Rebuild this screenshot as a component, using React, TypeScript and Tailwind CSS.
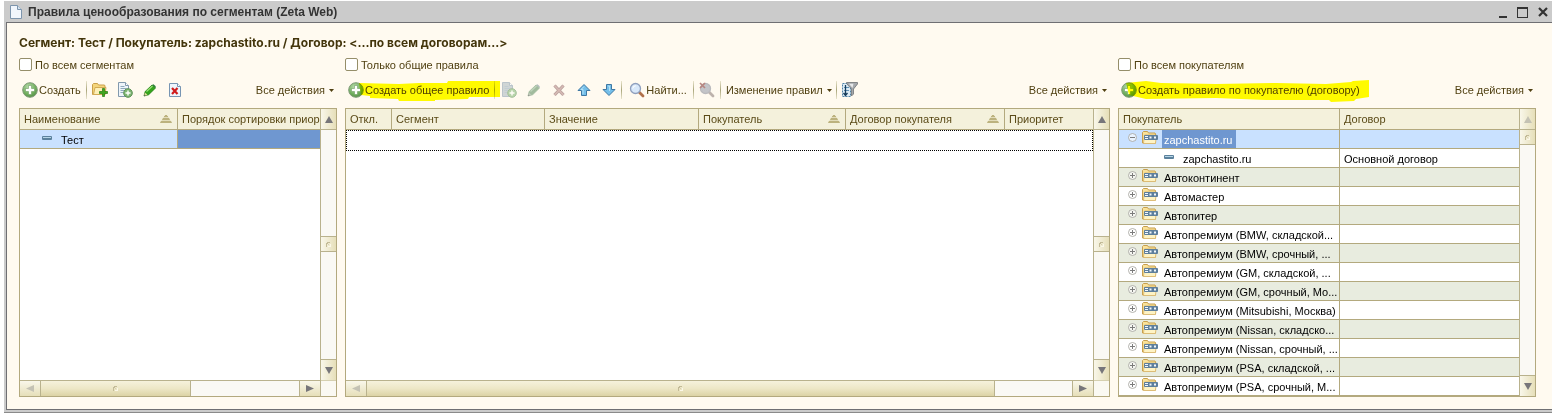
import React from "react";

type IconProps = { muted?: boolean };

const svgBase = "block shrink-0";

function AddIcon() {
  return (
    <svg className={svgBase} width="16" height="16" viewBox="0 0 16 16" aria-hidden="true">
      <defs>
        <radialGradient id="addFill" cx="0.4" cy="0.3" r="0.8">
          <stop offset="0" stopColor="#b9dcae" />
          <stop offset="0.6" stopColor="#6fae5c" />
          <stop offset="1" stopColor="#4f8a45" />
        </radialGradient>
      </defs>
      <circle cx="8" cy="8" r="7.3" fill="url(#addFill)" stroke="#7f9a78" strokeWidth="1" />
      <path d="M6.5 3.500h3v3h3v3h-3v3h-3v-3h-3v-3h3z" fill="#fff" stroke="#5d9150" strokeWidth="0.5" />
    </svg>
  );
}

function FolderAddIcon() {
  return (
    <svg className={svgBase} width="16" height="16" viewBox="0 0 16 16" aria-hidden="true">
      <path d="M.5 12.500v-10l1-1h4l1 1.500h6l.5 1v8.500z" fill="#f4d57c" stroke="#c9a04a" />
      <path d="M1.500 12.500 3 5.500h11l-1 7z" fill="#fdf0b8" stroke="#d3ab55" />
      <path d="M10.500 6.500h2v3h3v2h-3v3h-2v-3h-3v-2h3z" fill="#3fa91f" stroke="#237a10" strokeWidth="0.700" />
    </svg>
  );
}

function DocAddIcon({ muted }: IconProps) {
  return (
    <svg className={svgBase} width="16" height="16" viewBox="0 0 16 16" aria-hidden="true" opacity={muted ? 0.55 : 1}>
      <path d="M1.500 .5h7l3 3v11h-10z" fill={muted ? "#a9b8bf" : "#eef4fa"} stroke="#8299ad" />
      <path d="M8.500 .5v3h3" fill="#fff" stroke="#8299ad" />
      <path d="M3.500 4.500h4M3.500 6.500h6M3.500 8.500h4M3.500 10.500h3" stroke="#8fa9bd" />
      <circle cx="11" cy="11" r="4.300" fill="#7db672" stroke="#5b8f55" />
      <path d="M10.300 8.500h1.400v1.800h1.800v1.400h-1.800v1.800h-1.400v-1.800H8.500v-1.400h1.800z" fill="#fff" />
    </svg>
  );
}

function PencilIcon({ muted }: IconProps) {
  return (
    <svg className={svgBase} width="16" height="16" viewBox="0 0 16 16" aria-hidden="true" opacity={muted ? 0.65 : 1}>
      <path d="M2 14 3.200 9.500 10 3l3.500 3L6.700 12.700z" fill={muted ? "#6f9a72" : "#35a51c"} stroke={muted ? "#6f9a72" : "#1c7a10"} strokeWidth="0.800" />
      <path d="m10 3 1.500-.7 2.200 2-.2 1.700z" fill={muted ? "#8a9aa0" : "#2d7f3a"} />
      <path d="m4.500 9.500 6-5.500" stroke={muted ? "#9fc0a0" : "#9be07a"} strokeWidth="1.200" />
      <path d="m2 14 1-3.500 2.600 2.400z" fill={muted ? "#9fae9f" : "#e4d9a0"} />
      <path d="m2 14 .5-1.600 1.200 1.100z" fill="#444" />
    </svg>
  );
}

function DocDeleteIcon() {
  return (
    <svg className={svgBase} width="16" height="16" viewBox="0 0 16 16" aria-hidden="true">
      <path d="M2.500 1.500h8l3 3v10h-11z" fill="#eef5fc" stroke="#7795b3" />
      <path d="M10.500 1.500v3h3" fill="#fff" stroke="#7795b3" />
      <path d="m5 6 5.500 6m0-6L5 12" stroke="#d01c1c" strokeWidth="2.200" />
    </svg>
  );
}

function CrossIcon() {
  return (
    <svg className={svgBase} width="16" height="16" viewBox="0 0 16 16" aria-hidden="true">
      <path d="m3.500 3.500 9 9.500m0-9.500-9 9.500" stroke="#b8a09c" strokeWidth="3.200" />
      <path d="m3.500 3.500 9 9.500m0-9.500-9 9.500" stroke="#d6b9b4" strokeWidth="1.600" />
    </svg>
  );
}

function ArrowIcon({ down }: { down?: boolean }) {
  return (
    <svg className={svgBase} width="16" height="16" viewBox="0 0 16 16" aria-hidden="true">
      <path
        d={down ? "M5.500 2.500h5v5h3.500L8 13.500 2 7.500h3.500z" : "M5.500 13.500h5v-5H14L8 2.500 2 8.500h3.500z"}
        fill="#74bfea"
        stroke="#3f78a3"
      />
      <path d={down ? "M7 4h1.500v5" : "M7 12V7.500h-2L8 4.500"} fill="none" stroke="#b4e2f8" />
    </svg>
  );
}

function SearchIcon({ muted }: IconProps) {
  return (
    <svg className={svgBase} width="16" height="16" viewBox="0 0 16 16" aria-hidden="true" opacity={muted ? 0.75 : 1}>
      <path d="m10 10 4 4" stroke={muted ? "#a89a96" : "#b0704a"} strokeWidth="2.800" strokeLinecap="round" />
      <circle cx="6.500" cy="6.500" r="5" fill={muted ? "#b0b3bb" : "#d8e8fa"} stroke={muted ? "#a3a5ad" : "#8f9fbd"} strokeWidth="1.300" />
      {!muted && <path d="M3.800 6.500a3 3 0 0 1 3-2.700" fill="none" stroke="#fff" />}
      {muted && <path d="m1 1 5 5m0-5L1 6" stroke="#a0605c" strokeWidth="1.700" />}
    </svg>
  );
}

function FilterIcon() {
  return (
    <svg className={svgBase} width="16" height="16" viewBox="0 0 16 16" aria-hidden="true">
      <path d="M.500 1.500h8v13h-8z" fill="#dcebf5" stroke="#4f82a8" strokeDasharray="2 1" />
      <path d="M2 5.500h5M2 8.500h5" stroke="#5f91b5" />
      <path d="M3.500 3v10M1.500 11l2 2.500 2-2.500" stroke="#173d5c" strokeWidth="1.300" fill="none" />
      <path d="M4.500 .5h11v1.500L11.500 7v5l-2 2V7L5 2z" fill="#a5a8ac" stroke="#6f7276" strokeWidth="0.800" />
      <path d="M7 1.800h4.500l-1 4.200z" fill="#e6e8ea" />
    </svg>
  );
}

function SortIcon() {
  return (
    <svg className={svgBase} width="12" height="8" viewBox="0 0 12 8" aria-hidden="true">
      <path d="M5 0h2l5 8H0z" fill="#e2dcba" />
      <path d="M5 0h2v1h1v1H4V1h1zM3 3h6l1 2H2zM1 6h10l1 2H0z" fill="#bcb27e" />
    </svg>
  );
}

function DashIcon() {
  return (
    <svg className={svgBase} width="10" height="5" viewBox="0 0 10 5" aria-hidden="true">
      <rect x="0" y="0" width="10" height="4" rx="1" fill="#5b819c" />
      <path d="M1 1.500h8" stroke="#b5d4e6" />
    </svg>
  );
}

function FolderIcon() {
  return (
    <svg className={svgBase} width="16" height="13" viewBox="0 0 16 13" aria-hidden="true">
      <path d="M.5 12V1.500l1-1h4l1 1.500h6.500l.5 1v9z" fill="#f9e29a" stroke="#c79f4e" />
      <path d="M1.500 12.500 2.500 4h12l-1 8.500z" fill="#fef3c4" stroke="#d5ae5d" strokeWidth="0.700" />
      <rect x="2" y="4" width="14" height="5" rx="1" fill="#5e7f9c" />
      <path d="M3 5h3v1H3zM3 7h3v1H3zM7.500 5.500h2v2h-2zM12 5.500h2v2h-2z" fill="#f2f7fb" />
    </svg>
  );
}

function ToggleIcon({ open }: { open?: boolean }) {
  return (
    <svg className={svgBase} width="9" height="9" viewBox="0 0 9 9" aria-hidden="true">
      <circle cx="4.500" cy="4.500" r="4" fill="#fff" fillOpacity="0.600" stroke="#aaa9a4" strokeWidth="0.900" />
      <path d={open ? "M2 4.500h5" : "M2 4.500h5M4.500 2v5"} stroke="#7c7c7c" />
    </svg>
  );
}

function Triangle({ dir, faded }: { dir: "up" | "down" | "left" | "right"; faded?: boolean }) {
  const d = { up: "M4 0l4 7H0z", down: "M0 0h8L4 7z", left: "M8 0v7L0 3.500z", right: "M0 0v7l8-3.500z" }[dir];
  return (
    <svg className={svgBase} width="8" height="7" viewBox="0 0 8 7" aria-hidden="true">
      <path d={d} fill={faded ? "#c4c2b4" : "#77767a"} />
    </svg>
  );
}

function Grip() {
  return (
    <svg className={svgBase} width="5" height="5" viewBox="0 0 5 5" aria-hidden="true">
      <path d="M0 1h1V0h3v1H2v1H1v3H0z" fill="#c3bb97" />
      <path d="M2 2h1v1H2z" fill="#d8d1b0" />
      <path d="M4 2h1v3H2V4h2z" fill="#fbf8e8" />
    </svg>
  );
}

function Separator() {
  return <span className="mr-px h-[18px] w-px shrink-0 bg-gradient-to-b from-[#e9e4cc] via-[#aaa67c] to-[#e9e4cc]" />;
}

function IconButton({ label, children, disabled }: { label: string; children: React.ReactNode; disabled?: boolean }) {
  return (
    <button type="button" aria-label={label} disabled={disabled} className="flex h-5 w-[25px] shrink-0 items-center justify-center">
      {children}
    </button>
  );
}

function Caret() {
  return (
    <svg className={svgBase} width="5" height="3" viewBox="0 0 5 3" aria-hidden="true">
      <path d="M0 0h5L2.500 3z" fill="#4f3f10" />
    </svg>
  );
}

function AllActions() {
  return (
    <button type="button" className="ml-auto flex shrink-0 items-center gap-1 whitespace-nowrap pr-[3px]">
      Все действия
      <Caret />
    </button>
  );
}

function CreateButton({ children, marker }: { children: React.ReactNode; marker?: React.ReactNode }) {
  return (
    <button type="button" className="relative flex shrink-0 items-center gap-px whitespace-nowrap pl-[3px] pr-[5px]">
      <AddIcon />
      <span>{children}</span>
      {marker}
    </button>
  );
}

function CheckRow({ id, label }: { id: string; label: string }) {
  return (
    <div className="flex h-[15px] items-center gap-[3px]">
      <input
        id={id}
        type="checkbox"
        className="h-[13px] w-[13px] shrink-0 appearance-none rounded-[2px] border border-[#958e69] bg-white checked:bg-[#958e69]"
      />
      <label htmlFor={id} className="whitespace-nowrap">{label}</label>
    </div>
  );
}

const vGrad = "bg-gradient-to-r from-[#f9f7ea] to-[#e6dfb9]";
const hGrad = "bg-gradient-to-b from-[#f9f7ea] to-[#e6dfb9]";
const sbButton = "flex shrink-0 items-center justify-center border-[#b9b28d]";

function VerticalBar({ atTop, corner }: { atTop?: boolean; corner?: boolean }) {
  return (
    <div className="flex w-4 shrink-0 flex-col border-l border-[#b9b28d] bg-[#faf9f4]">
      <button type="button" aria-label="Вверх" className={`${sbButton} ${vGrad} h-[21px] border-b`}>
        <Triangle dir="up" faded={atTop} />
      </button>
      <div className="flex flex-1 flex-col">
        {!atTop && <div className="flex-[106]" />}
        <div className={`${sbButton} ${vGrad} border-b ${atTop ? "h-[15px]" : "h-4 border-t"}`}>
          <Grip />
        </div>
        <div className="flex-[107]" />
      </div>
      <button type="button" aria-label="Вниз" className={`${sbButton} ${vGrad} h-[21px] border-t`}>
        <Triangle dir="down" />
      </button>
      {corner && <div className="h-4 shrink-0 border-t border-[#d5d0b0] bg-[#faf9f2]" />}
    </div>
  );
}

function HorizontalBar({ thumb, rest }: { thumb: string; rest: string }) {
  return (
    <div className="flex h-4 shrink-0 border-t border-[#b9b28d] bg-[#faf9f4]">
      <button type="button" aria-label="Влево" className={`${sbButton} ${hGrad} w-[21px] border-r`}>
        <Triangle dir="left" faded />
      </button>
      <div className={`flex items-center justify-center border-r border-[#b9b28d] bg-gradient-to-b from-[#f6f2dc] via-[#ede7c6] to-[#dcd3a5] ${thumb}`}>
        <Grip />
      </div>
      <div className={rest} />
      <button type="button" aria-label="Вправо" className={`${sbButton} ${hGrad} w-[21px] border-l`}>
        <Triangle dir="right" />
      </button>
    </div>
  );
}

type Column = { title: string; width: string; sorted?: boolean };

function HeadRow({ columns }: { columns: Column[] }) {
  return (
    <thead>
      <tr>
        {columns.map((c, i) => (
          <th
            key={c.title}
            scope="col"
            className={`h-[21px] overflow-hidden border-b border-[#b3a97e] bg-[#f4f1dc] p-0 pl-1 text-left font-normal text-[#5a4a17] ${c.width} ${
              i < columns.length - 1 ? "border-r" : ""
            }`}
          >
            <div className="flex items-center justify-between">
              <span className="whitespace-nowrap">{c.title}</span>
              {c.sorted && <span className="pr-[5px]"><SortIcon /></span>}
            </div>
          </th>
        ))}
      </tr>
    </thead>
  );
}

const tableClass = "w-full table-fixed border-separate border-spacing-0";
const frame = "flex flex-1 border border-[#b3a97e] bg-white";

const customers = [
  "Автоконтинент",
  "Автомастер",
  "Автопитер",
  "Автопремиум (BMW, складской...",
  "Автопремиум (BMW, срочный, ...",
  "Автопремиум (GM, складской, ...",
  "Автопремиум (GM, срочный, Мо...",
  "Автопремиум (Mitsubishi, Москва)",
  "Автопремиум (Nissan, складско...",
  "Автопремиум (Nissan, срочный, ...",
  "Автопремиум (PSA, складской, ...",
  "Автопремиум (PSA, срочный, М...",
];

const cell = "h-[19px] border-b border-[#b3a97e] p-0";

function TreeNode({ open, selected, children }: { open?: boolean; selected?: boolean; children: React.ReactNode }) {
  return (
    <div className="flex h-[18px] items-center pl-[9px]">
      <span className="flex items-center gap-[5px] pb-[3px]">
        <ToggleIcon open={open} />
        <FolderIcon />
      </span>
      <span className={`ml-1 whitespace-nowrap pl-0.5 leading-[16px] pt-0.5 ${selected ? "bg-[#6f97d0] pr-1 text-white" : ""}`}>{children}</span>
    </div>
  );
}

function Leaf({ indent, children }: { indent: string; children: React.ReactNode }) {
  return (
    <div className={`flex h-[18px] items-center gap-[9px] ${indent}`}>
      <span className="pb-0.5"><DashIcon /></span>
      <span className="pt-0.5">{children}</span>
    </div>
  );
}

function SegmentsPanel() {
  return (
    <section className="flex min-w-0 flex-[318] flex-col">
      <CheckRow id="all-segments" label="По всем сегментам" />
      <div className="flex h-9 items-center">
        <CreateButton>Создать</CreateButton>
        <Separator />
        <IconButton label="Создать группу"><FolderAddIcon /></IconButton>
        <IconButton label="Скопировать"><DocAddIcon /></IconButton>
        <IconButton label="Изменить"><PencilIcon /></IconButton>
        <IconButton label="Пометить на удаление"><DocDeleteIcon /></IconButton>
        <AllActions />
      </div>
      <div className={frame}>
        <div className="flex min-w-0 flex-1 flex-col">
          <div className="flex-1">
            <table className={tableClass}>
              <HeadRow columns={[{ title: "Наименование", width: "w-[158px]", sorted: true }, { title: "Порядок сортировки приор", width: "" }]} />
              <tbody>
                <tr>
                  <td className={`${cell} border-r bg-[#c9e1ff] text-black`}>
                    <Leaf indent="pl-[22px]">Тест</Leaf>
                  </td>
                  <td className={`${cell} bg-[#6f97d0]`} />
                </tr>
              </tbody>
            </table>
          </div>
          <HorizontalBar thumb="flex-[150]" rest="flex-[108]" />
        </div>
        <VerticalBar corner />
      </div>
    </section>
  );
}

function RulesPanel() {
  return (
    <section className="flex min-w-0 flex-[765] flex-col">
      <CheckRow id="common-only" label="Только общие правила" />
      <div className="flex h-9 items-center">
        <CreateButton
          marker={
            <svg className="pointer-events-none absolute -top-0.5 left-3.5 mix-blend-multiply" width="142" height="22" viewBox="0 0 142 22" aria-hidden="true">
              <path d="M0 3 40 4 60 3 88 3 89 1 141 1V17H110L109 19 76 20V21H40L39 19 11 18V16L2 15z" fill="#ffff00" />
            </svg>
          }
        >
          Создать общее правило
        </CreateButton>
        <Separator />
        <IconButton label="Скопировать" disabled><DocAddIcon muted /></IconButton>
        <IconButton label="Изменить" disabled><PencilIcon muted /></IconButton>
        <IconButton label="Удалить" disabled><CrossIcon /></IconButton>
        <IconButton label="Переместить вверх"><ArrowIcon /></IconButton>
        <IconButton label="Переместить вниз"><ArrowIcon down /></IconButton>
        <Separator />
        <button type="button" className="flex shrink-0 items-center gap-px whitespace-nowrap px-1.5"><SearchIcon />Найти...</button>
        <Separator />
        <IconButton label="Отменить поиск" disabled><SearchIcon muted /></IconButton>
        <Separator />
        <button type="button" className="flex shrink-0 items-center gap-1 whitespace-nowrap px-1">Изменение правил<Caret /></button>
        <Separator />
        <IconButton label="Настройка списка"><FilterIcon /></IconButton>
        <AllActions />
      </div>
      <div className={frame}>
        <div className="flex min-w-0 flex-1 flex-col">
          <div className="flex-1">
            <table className={tableClass}>
              <HeadRow
                columns={[
                  { title: "Откл.", width: "w-[46px]" },
                  { title: "Сегмент", width: "w-[153px]" },
                  { title: "Значение", width: "w-[154px]" },
                  { title: "Покупатель", width: "w-[147px]", sorted: true },
                  { title: "Договор покупателя", width: "w-[159px]", sorted: true },
                  { title: "Приоритет", width: "" },
                ]}
              />
              <tbody>
                <tr>
                  <td colSpan={6} className="h-[21px] border border-dotted border-black p-0" />
                </tr>
              </tbody>
            </table>
          </div>
          <HorizontalBar thumb="flex-[628]" rest="flex-[77]" />
        </div>
        <VerticalBar corner />
      </div>
    </section>
  );
}

function CustomersPanel() {
  return (
    <section className="flex min-w-0 flex-[418] flex-col">
      <CheckRow id="all-customers" label="По всем покупателям" />
      <div className="flex h-9 items-center">
        <CreateButton
          marker={
            <svg className="pointer-events-none absolute -top-0.5 left-2 mix-blend-multiply" width="244" height="23" viewBox="0 0 244 23" aria-hidden="true">
              <path d="M0 3 20 1 35 3 90 4 150 3 200 4 225 2 227 1 243 0V17L230 19 228 21 205 22 203 20 140 20 90 18 20 19 3 15z" fill="#ffff00" />
            </svg>
          }
        >
          Создать правило по покупателю (договору)
        </CreateButton>
        <AllActions />
      </div>
      <div className={frame}>
        <div className="min-w-0 flex-1">
          <table className={tableClass}>
            <HeadRow columns={[{ title: "Покупатель", width: "w-[221px]" }, { title: "Договор", width: "" }]} />
            <tbody className="text-black">
              <tr className="bg-[#c9e1ff]">
                <td className={`${cell} border-r`}>
                  <TreeNode open selected>zapchastito.ru</TreeNode>
                </td>
                <td className={cell} />
              </tr>
              <tr>
                <td className={`${cell} border-r`}>
                  <Leaf indent="pl-[45px]">zapchastito.ru</Leaf>
                </td>
                <td className={`${cell} pl-1`}><div className="pt-0.5">Основной договор</div></td>
              </tr>
              {customers.map((name, i) => (
                <tr key={name} className={i % 2 === 0 ? "bg-[#e8ecdf]" : "bg-white"}>
                  <td className={`${cell} border-r`}>
                    <TreeNode>{name}</TreeNode>
                  </td>
                  <td className={cell} />
                </tr>
              ))}
            </tbody>
          </table>
        </div>
        <VerticalBar atTop />
      </div>
    </section>
  );
}

export default function App() {
  return (
    <div className="flex min-h-screen flex-col bg-white pl-1 pt-px font-['Liberation_Sans',Arial,sans-serif] text-[11px] leading-[14px] text-[#4f3f10]">
      <div className="flex flex-1 flex-col border-b border-[#8a8a8a] bg-[#cbcbcb] pb-0.5 pl-0.5">
        <header className="flex h-[21px] items-center gap-1.5 pl-1 pr-1 pt-px text-[#333]">
          <svg className={svgBase} width="12" height="14" viewBox="0 0 12 14" aria-hidden="true">
            <path d="M.5 .5h7l4 4v9H.5z" fill="#f1f6fc" stroke="#7d95ad" />
            <path d="M7.500 .5v4h4" fill="#d6e3f0" stroke="#7d95ad" />
          </svg>
          <h1 className="flex-1 whitespace-nowrap text-xs font-bold">Правила ценообразования по сегментам (Zeta Web)</h1>
          <div className="flex items-center gap-2.5">
            <button type="button" aria-label="Свернуть" className="flex h-[11px] w-2 items-end"><span className="h-0.5 w-full bg-[#333]" /></button>
            <button type="button" aria-label="Развернуть" className="h-[11px] w-[11px] border border-t-2 border-[#333]" />
            <button type="button" aria-label="Закрыть">
              <svg className={svgBase} width="10" height="10" viewBox="0 0 10 10" aria-hidden="true">
                <path d="m1 1 8 8m0-8L1 9" stroke="#333" strokeWidth="2.200" />
              </svg>
            </button>
          </div>
        </header>
        <main className="flex flex-1 flex-col border-y border-l border-[#6f6f73] bg-[#fffaf0] pb-3 pl-3 pr-4 pt-[13px]">
          <h2 className="mb-[7px] whitespace-nowrap font-['Inter','Liberation_Sans',sans-serif] text-xs leading-[14px] font-bold text-[#43350b]">
            Сегмент: Тест / Покупатель: zapchastito.ru / Договор: &lt;...по всем договорам...&gt;
          </h2>
          <div className="flex flex-1 gap-2">
            <SegmentsPanel />
            <RulesPanel />
            <CustomersPanel />
          </div>
        </main>
      </div>
    </div>
  );
}
